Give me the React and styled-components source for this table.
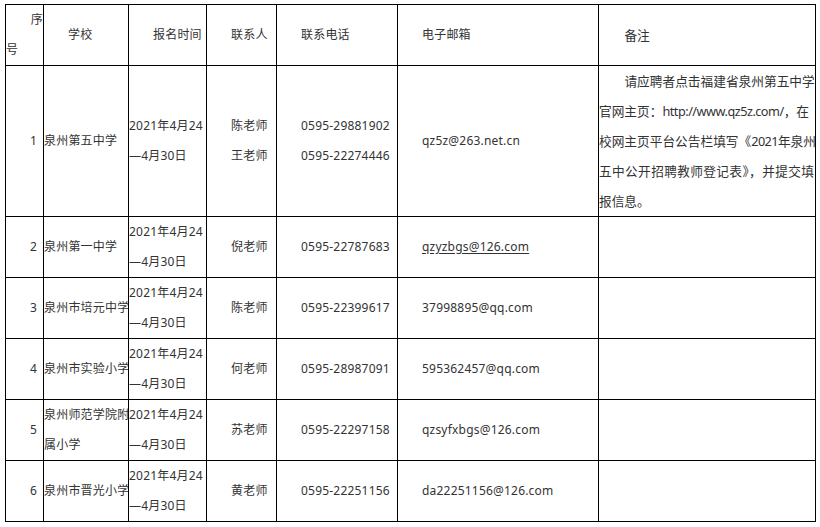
import React from "react";
import styled, { createGlobalStyle } from "styled-components";

const Global = createGlobalStyle`
  html, body { margin: 0; padding: 0; background: #fff; }
  body { font-family: "Noto Sans", "Noto Sans CJK SC", sans-serif; color: #333; }
`;

const Page = styled.div`
  padding: 4px 0 0 5px;
`;

const Table = styled.table`
  border-collapse: collapse;
  table-layout: fixed;
  width: 810px;
  font-size: 12px;
  line-height: 30px;
  color: #333;
`;

const Cell = styled.td`
  border: 1px solid #000;
  padding: 0;
  vertical-align: middle;
  text-align: ${(p) => p.$align || "left"};
  padding-right: ${(p) => (p.$align === "right" ? "6px" : "0")};
  text-indent: ${(p) => (p.$indent ? "2em" : "0")};
  white-space: nowrap;
  overflow: hidden;
  letter-spacing: 0.2px;
`;

const Line = styled.span`
  display: block;
  text-align: ${(p) => p.$align || "inherit"};
  text-indent: ${(p) => p.$indent || "inherit"};
  letter-spacing: ${(p) => p.$spacing || "inherit"};
`;

const Remark = styled.td`
  border: 1px solid #000;
  padding: 0;
  vertical-align: middle;
  font-size: 12.7px;
  white-space: nowrap;
  overflow: hidden;
`;

const Tight = styled.span`
  letter-spacing: ${(p) => p.$by || "-0.5px"};
`;

const Mail = styled.span`
  text-decoration: ${(p) => (p.$link ? "underline" : "none")};
  text-underline-offset: 2px;
`;

const widths = [38, 85, 78, 70, 121, 201, 217];

const rows = [
  { n: 2, school: ["泉州第一中学"], who: "倪老师", tel: "0595-22787683", mail: "qzyzbgs@126.com", link: true },
  { n: 3, school: ["泉州市培元中学"], who: "陈老师", tel: "0595-22399617", mail: "37998895@qq.com" },
  { n: 4, school: ["泉州市实验小学"], who: "何老师", tel: "0595-28987091", mail: "595362457@qq.com" },
  { n: 5, school: ["泉州师范学院附", "属小学"], who: "苏老师", tel: "0595-22297158", mail: "qzsyfxbgs@126.com" },
  { n: 6, school: ["泉州市晋光小学"], who: "黄老师", tel: "0595-22251156", mail: "da22251156@126.com" },
];

const DateCell = () => (
  <Cell>
    <Line>2021年4月24</Line>
    <Line>—4月30日</Line>
  </Cell>
);

export default function App() {
  return (
    <Page>
      <Global />
      <Table>
        <colgroup>
          {widths.map((w, i) => (
            <col key={i} style={{ width: w }} />
          ))}
        </colgroup>
        <tbody>
          <tr>
            <Cell>
              <Line $align="right">序</Line>
              <Line $align="left">号</Line>
            </Cell>
            <Cell $indent>学校</Cell>
            <Cell $indent>报名时间</Cell>
            <Cell $indent>联系人</Cell>
            <Cell $indent>联系电话</Cell>
            <Cell $indent>电子邮箱</Cell>
            <Remark>
              <Line $indent="2em">备注</Line>
            </Remark>
          </tr>
          <tr>
            <Cell $align="right">1</Cell>
            <Cell>泉州第五中学</Cell>
            <DateCell />
            <Cell $indent>
              <Line>陈老师</Line>
              <Line>王老师</Line>
            </Cell>
            <Cell $indent>
              <Line>0595-29881902</Line>
              <Line>0595-22274446</Line>
            </Cell>
            <Cell $indent>qz5z@263.net.cn</Cell>
            <Remark>
              <Line $indent="2em">请应聘者点击福建省泉州第五中学</Line>
              <Line>
                官网主页：<Tight>http://www.qz5z.com/</Tight>，在
              </Line>
              <Line>
                校网主页平台公告栏填写《<Tight $by="-0.6px">2021</Tight>年泉州
              </Line>
              <Line $spacing="0.35px">五中公开招聘教师登记表》，并提交填</Line>
              <Line>报信息。</Line>
            </Remark>
          </tr>
          {rows.map((r) => (
            <tr key={r.n}>
              <Cell $align="right">{r.n}</Cell>
              <Cell>
                {r.school.map((s) => (
                  <Line key={s}>{s}</Line>
                ))}
              </Cell>
              <DateCell />
              <Cell $indent>{r.who}</Cell>
              <Cell $indent>{r.tel}</Cell>
              <Cell $indent>
                <Mail $link={r.link}>{r.mail}</Mail>
              </Cell>
              <Remark />
            </tr>
          ))}
        </tbody>
      </Table>
    </Page>
  );
}
